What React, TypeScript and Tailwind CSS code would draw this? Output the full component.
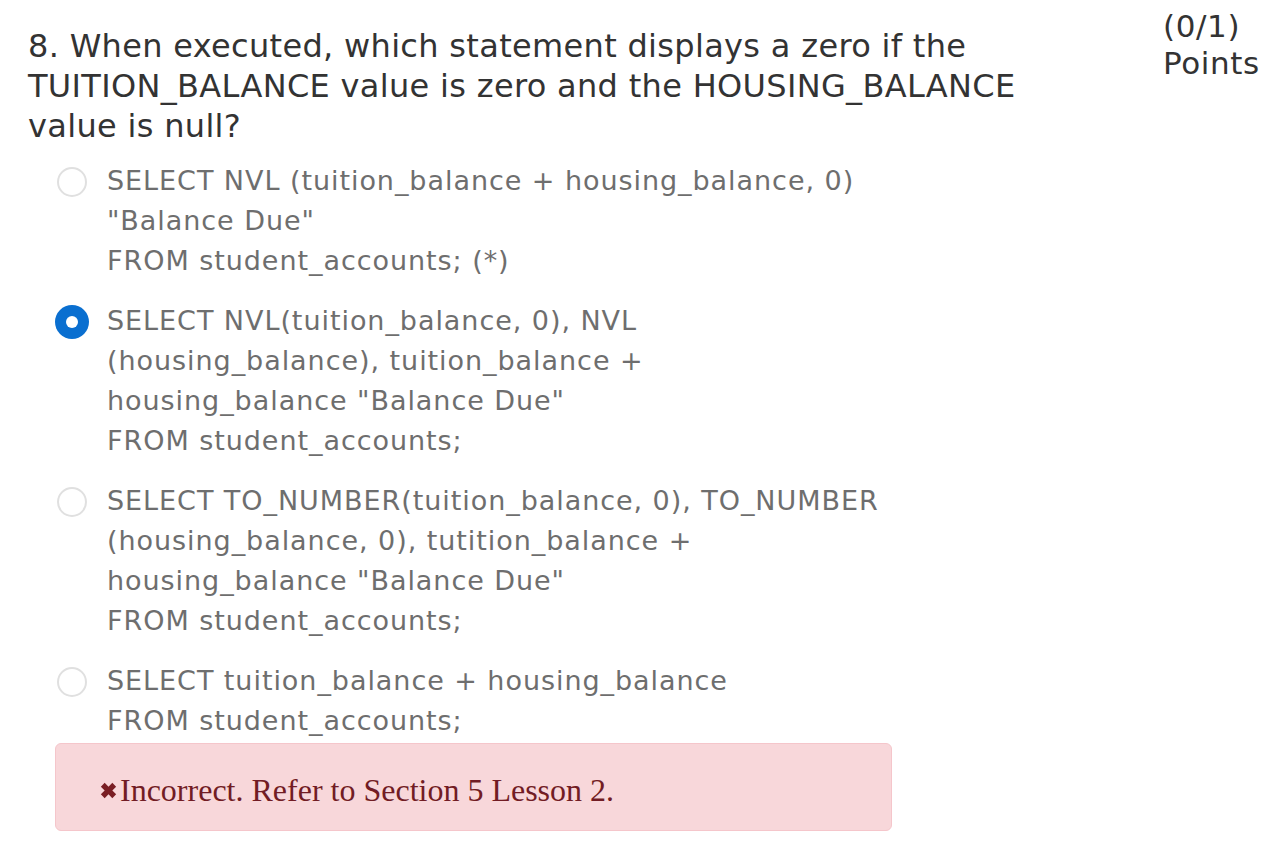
const options: { lines: string[]; checked?: boolean }[] = [
  {
    lines: [
      'SELECT NVL (tuition_balance + housing_balance, 0)',
      '"Balance Due"',
      'FROM student_accounts; (*)',
    ],
  },
  {
    lines: [
      'SELECT NVL(tuition_balance, 0), NVL',
      '(housing_balance), tuition_balance +',
      'housing_balance "Balance Due"',
      'FROM student_accounts;',
    ],
    checked: true,
  },
  {
    lines: [
      'SELECT TO_NUMBER(tuition_balance, 0), TO_NUMBER',
      '(housing_balance, 0), tutition_balance +',
      'housing_balance "Balance Due"',
      'FROM student_accounts;',
    ],
  },
  {
    lines: ['SELECT tuition_balance + housing_balance', 'FROM student_accounts;'],
  },
];

function Radio({ checked }: { checked?: boolean }) {
  if (checked) {
    return (
      <div className="flex h-[34px] w-[34px] items-center justify-center rounded-full bg-[#0a6fd0]">
        <div className="h-[12px] w-[12px] rounded-full bg-white" />
      </div>
    );
  }
  return (
    <div className="m-[2px] h-[30px] w-[30px] rounded-full border-2 border-[#e0e0e0] bg-white" />
  );
}

export default function App() {
  return (
    <div className="min-h-[858px] w-[1280px] bg-white font-['DejaVu_Sans',sans-serif]">
      <div className="flex pl-[28px] pt-[26px]">
        <h2 className="w-[1135px] text-[32px] leading-[40px] tracking-[0.01em] text-[#333333]">
          8. When executed, which statement displays a zero if the
          <br />
          TUITION_BALANCE value is zero and the HOUSING_BALANCE
          <br />
          value is null?
        </h2>
        <div className="-mt-[18px] text-[31px] leading-[37px] tracking-[0.02em] text-[#333333]">
          (0/1)
          <br />
          Points
        </div>
      </div>

      <div className="ml-[55px] mt-[15px] w-[837px]">
        <div className="flex flex-col gap-[20px]">
          {options.map((opt, i) => (
            <label key={i} className="flex gap-[18px]">
              <div className="shrink-0 pt-[4px]">
                <Radio checked={opt.checked} />
              </div>
              <div className="text-[27px] leading-[40px] tracking-[0.035em] text-[#6e6e6e]">
                {opt.lines.map((l, j) => (
                  <div key={j}>{l}</div>
                ))}
              </div>
            </label>
          ))}
        </div>

        <div className="mt-[2px] flex h-[88px] items-center rounded-[6px] border border-[#f5c6cb] bg-[#f8d7da] pl-[44px] pt-[6px] font-['Liberation_Serif',serif] text-[32px] text-[#721c24]">
          <svg viewBox="0 0 20 20" className="mr-[3px] h-[17px] w-[17px]" fill="#7a1e24">
            <path d="M1 5.5 5.5 1 10 5.5 14.5 1 19 5.5 14.5 10 19 14.5 14.5 19 10 14.5 5.5 19 1 14.5 5.5 10Z" />
          </svg>
          <span>Incorrect. Refer to Section 5 Lesson 2.</span>
        </div>
      </div>
    </div>
  );
}
